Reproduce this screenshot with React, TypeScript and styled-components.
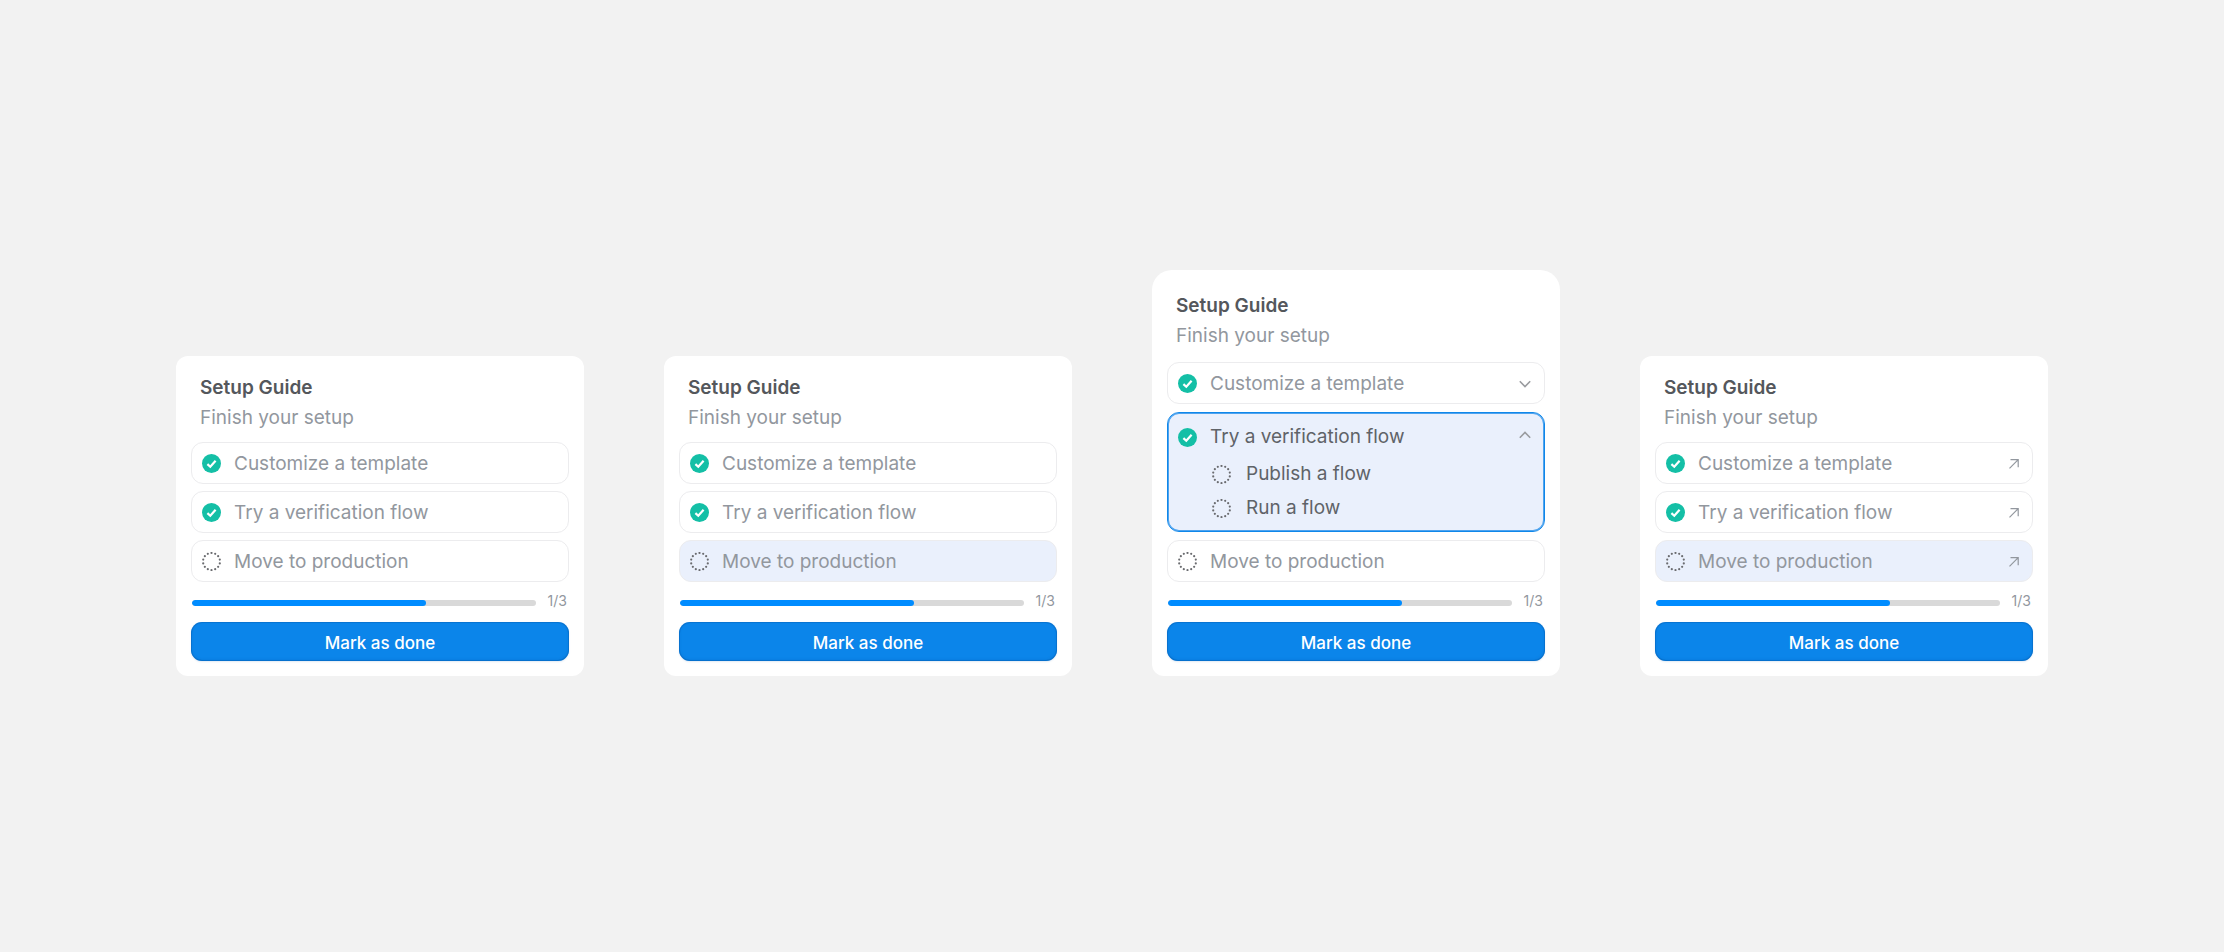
import React from "react";
import styled, { createGlobalStyle, css } from "styled-components";

const GlobalStyle = createGlobalStyle`
  *, *::before, *::after { box-sizing: border-box; }
  body {
    margin: 0;
    background: #f2f2f2;
    font-family: Inter, "Liberation Sans", sans-serif;
    -webkit-font-smoothing: antialiased;
  }
`;

const Board = styled.main`
  min-height: 100vh;
  display: flex;
  flex-wrap: wrap;
  justify-content: center;
  align-items: flex-end;
  align-content: center;
  gap: 80px;
  padding: 0 16px 6px;
`;

const Card = styled.section<{ $tall?: boolean }>`
  flex: 0 1 408px;
  min-width: 320px;
  display: flex;
  flex-direction: column;
  padding: ${(p) => (p.$tall ? "21px 15px 15px" : "17px 15px 15px")};
  border-radius: ${(p) => (p.$tall ? "20px 20px 12px 12px" : "12px")};
  background: #ffffff;
`;

const Header = styled.header<{ $tall?: boolean }>`
  padding: 0 9px;
  margin-bottom: ${(p) => (p.$tall ? 11 : 9)}px;
`;

const Title = styled.h2`
  margin: 0;
  font-size: 19px;
  line-height: 30px;
  font-weight: 600;
  color: #54575c;
`;

const Subtitle = styled.p`
  margin: 0;
  font-size: 19px;
  line-height: 30px;
  color: #92979e;
`;

const Steps = styled.ul<{ $gap: number }>`
  list-style: none;
  margin: 0;
  padding: 0;
  display: flex;
  flex-direction: column;
  gap: ${(p) => p.$gap}px;
`;

const rowLayout = css`
  width: 100%;
  display: flex;
  align-items: center;
  gap: 13px;
  font: inherit;
  font-size: 19px;
  line-height: 24px;
  text-align: left;
  text-decoration: none;
`;

const rowBox = css<{ $active?: boolean }>`
  ${rowLayout}
  height: 42px;
  padding: 1px 13px 0 10px;
  border: 1px solid #ececee;
  border-radius: 12px;
  color: #92979e;
  background: ${(p) => (p.$active ? "#eaf0fc" : "#ffffff")};
`;

const PlainRow = styled.div<{ $active?: boolean }>`
  ${rowBox}
`;

const LinkRow = styled.a<{ $active?: boolean }>`
  ${rowBox}
`;

const ButtonRow = styled.button<{ $active?: boolean }>`
  ${rowBox}
  cursor: pointer;
`;

const Label = styled.span`
  flex: 1;
  white-space: nowrap;
`;

const OpenGroup = styled.div`
  height: 120px;
  padding: 12px 13px 0 10px;
  border: 1px solid #0f87ea;
  border-radius: 12px;
  background: #eaf0fc;
  box-shadow: inset 0 0 0 1px #4fa3ee;
  color: #5f6368;
`;

const GroupToggle = styled.button`
  ${rowLayout}
  padding: 0;
  border: 0;
  background: none;
  color: inherit;
  cursor: pointer;
`;

const SubSteps = styled.ul`
  list-style: none;
  margin: 8px 0 0;
  padding: 0 0 0 34px;
`;

const SubStep = styled.li`
  ${rowLayout}
  gap: 15px;
  height: 34px;
`;

const Progress = styled.div`
  display: flex;
  align-items: center;
  gap: 12px;
  height: 40px;
  padding: 0 2px 0 1px;
`;

const Track = styled.div`
  flex: 1;
  height: 6px;
  margin-top: 2px;
  border-radius: 3px;
  overflow: hidden;
  background: #d9d9d9;
`;

const Fill = styled.div`
  height: 100%;
  border-radius: 3px;
  background: #008cff;
`;

const Count = styled.span`
  font-size: 14px;
  line-height: 20px;
  margin-bottom: 2px;
  color: #92979e;
`;

const DoneButton = styled.button`
  height: 39px;
  padding: 2px 0 0;
  border: 0;
  border-radius: 11px;
  font: inherit;
  font-size: 17px;
  line-height: 24px;
  font-weight: 500;
  color: #ffffff;
  background: #0b85ea;
  box-shadow: inset 0 0 0 1px rgba(4, 96, 180, 0.4), inset 0 -1px 3px rgba(4, 90, 170, 0.3), 0 1px 2px #e2eaf3;
  cursor: pointer;
`;

const Icon = styled.svg`
  display: block;
  flex: none;
`;

const DoneIcon = () => (
  <Icon width="19" height="19" viewBox="0 0 19 19" aria-label="Done">
    <circle cx="9.5" cy="9.5" r="9.5" fill="#14bfa6" />
    <path d="M5.4 10.1L8.3 12.8L13.6 6.8" fill="none" stroke="#ffffff" strokeWidth="2.2" />
  </Icon>
);

const dots = Array.from({ length: 14 }, (_, i) => (i * Math.PI) / 7 - Math.PI / 2);

const TodoIcon = () => (
  <Icon width="19" height="19" viewBox="0 0 19 19" aria-label="To do">
    {dots.map((a) => (
      <circle key={a} cx={9.5 + 8.5 * Math.cos(a)} cy={9.5 + 8.5 * Math.sin(a)} r="1.1" fill="#6b6c70" />
    ))}
  </Icon>
);

const Chevron = ({ up }: { up?: boolean }) => (
  <Icon width="12" height="12" viewBox="0 0 12 12" fill="none" stroke="#999b9f" strokeWidth="1.6">
    <path d={up ? "M0.8 6.8L6 1.5L11.2 6.8" : "M0.8 3.3L6 8.6L11.2 3.3"} />
  </Icon>
);

const ArrowOut = () => (
  <Icon width="10" height="10" viewBox="0 0 10 10" fill="none" stroke="#92979e" strokeWidth="1.2">
    <path d="M0.5 9.3L9.2 0.6M1.5 0.6H9.2V8.3" />
  </Icon>
);

type Variant = "plain" | "links" | "accordion";

const steps = [
  { label: "Customize a template", done: true },
  { label: "Try a verification flow", done: true, children: ["Publish a flow", "Run a flow"] },
  { label: "Move to production", done: false },
];

const StatusIcon = ({ done }: { done: boolean }) => (done ? <DoneIcon /> : <TodoIcon />);

function Step({ step, variant, active }: { step: (typeof steps)[number]; variant: Variant; active: boolean }) {
  if (variant === "accordion" && active && step.children) {
    return (
      <OpenGroup>
        <GroupToggle type="button" aria-expanded="true">
          <StatusIcon done={step.done} />
          <Label>{step.label}</Label>
          <Chevron up />
        </GroupToggle>
        <SubSteps>
          {step.children.map((child) => (
            <SubStep key={child}>
              <TodoIcon />
              <Label>{child}</Label>
            </SubStep>
          ))}
        </SubSteps>
      </OpenGroup>
    );
  }
  const content = (
    <>
      <StatusIcon done={step.done} />
      <Label>{step.label}</Label>
    </>
  );
  if (variant === "links") {
    return (
      <LinkRow href="#" $active={active}>
        {content}
        <ArrowOut />
      </LinkRow>
    );
  }
  if (variant === "accordion" && step.done) {
    return (
      <ButtonRow type="button" aria-expanded="false" $active={active}>
        {content}
        <Chevron />
      </ButtonRow>
    );
  }
  return <PlainRow $active={active}>{content}</PlainRow>;
}

function SetupCard({ variant, active = -1 }: { variant: Variant; active?: number }) {
  const tall = variant === "accordion";
  const percent = 68;
  return (
    <Card $tall={tall}>
      <Header $tall={tall}>
        <Title>Setup Guide</Title>
        <Subtitle>Finish your setup</Subtitle>
      </Header>
      <Steps $gap={tall ? 8 : 7}>
        {steps.map((step, i) => (
          <li key={step.label}>
            <Step step={step} variant={variant} active={i === active} />
          </li>
        ))}
      </Steps>
      <Progress>
        <Track role="progressbar" aria-label="Setup progress" aria-valuenow={percent}>
          <Fill style={{ width: `${percent}%` }} />
        </Track>
        <Count>1/3</Count>
      </Progress>
      <DoneButton type="button">Mark as done</DoneButton>
    </Card>
  );
}

export default function App() {
  return (
    <>
      <GlobalStyle />
      <Board>
        <SetupCard variant="plain" />
        <SetupCard variant="plain" active={2} />
        <SetupCard variant="accordion" active={1} />
        <SetupCard variant="links" active={2} />
      </Board>
    </>
  );
}
